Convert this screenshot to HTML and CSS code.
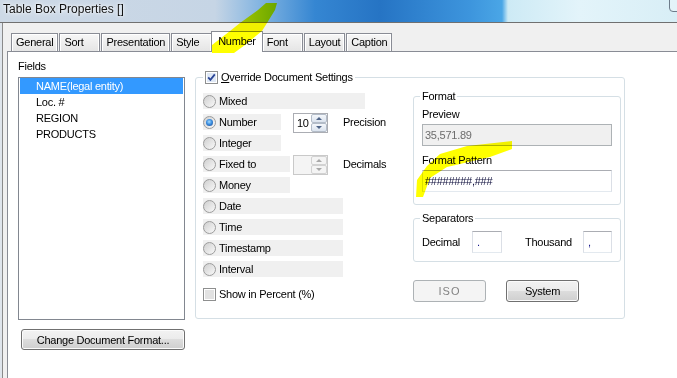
FILE: index.html
```html
<!DOCTYPE html>
<html lang="en">
<head>
  <meta charset="UTF-8">
  <title>Table Box Properties</title>
  <link rel="stylesheet" href="styles.css">
</head>
<body>
  <div class="titlebar">
    <span class="title">Table Box Properties []</span>
    <span class="close-edge"></span>
  </div>

  <div class="window">
    <div class="tabs">
      <div class="tab">General</div>
      <div class="tab">Sort</div>
      <div class="tab">Presentation</div>
      <div class="tab">Style</div>
      <div class="tab active">Number</div>
      <div class="tab">Font</div>
      <div class="tab">Layout</div>
      <div class="tab">Caption</div>
    </div>

    <div class="panel">
      <div class="fields-col">
        <div class="fields-label">Fields</div>
        <ul class="listbox">
          <li class="selected">NAME(legal entity)</li>
          <li>Loc. #</li>
          <li>REGION</li>
          <li>PRODUCTS</li>
        </ul>
        <button class="btn btn-wide">Change Document Format...</button>
      </div>

      <fieldset class="group override">
        <legend>
          <svg class="check" width="13" height="13" viewBox="0 0 13 13">
            <rect x="0.5" y="0.5" width="12" height="12" fill="#fff" stroke="#8e8f8f"/>
            <rect x="2" y="2" width="9" height="9" fill="#dfe8f5"/>
            <path d="M3.2 6.4 L5.4 8.8 L9.8 3.4" fill="none" stroke="#2a4596" stroke-width="1.8"/>
          </svg><u>O</u>verride Document Settings
        </legend>
        <div class="override-body">
          <div class="options">
            <div class="row"><span class="opt opt-long"><i class="radio"></i>Mixed</span></div>
            <div class="row spin-row">
              <span class="opt opt-short"><i class="radio on"></i>Number</span>
              <span class="spin">
                <span class="spin-val">10</span>
                <span class="spin-btns">
                  <span class="spin-btn"><i class="arrow-up"></i></span>
                  <span class="spin-btn"><i class="arrow-down"></i></span>
                </span>
              </span>
              <span class="spin-caption">Precision</span>
            </div>
            <div class="row"><span class="opt opt-short"><i class="radio"></i>Integer</span></div>
            <div class="row spin-row">
              <span class="opt opt-mid"><i class="radio"></i>Fixed to</span>
              <span class="spin disabled">
                <span class="spin-val"></span>
                <span class="spin-btns">
                  <span class="spin-btn"><i class="arrow-up"></i></span>
                  <span class="spin-btn"><i class="arrow-down"></i></span>
                </span>
              </span>
              <span class="spin-caption">Decimals</span>
            </div>
            <div class="row"><span class="opt opt-mid"><i class="radio"></i>Money</span></div>
            <div class="row"><span class="opt"><i class="radio"></i>Date</span></div>
            <div class="row"><span class="opt"><i class="radio"></i>Time</span></div>
            <div class="row"><span class="opt"><i class="radio"></i>Timestamp</span></div>
            <div class="row"><span class="opt"><i class="radio"></i>Interval</span></div>
            <div class="row percent">
              <svg class="check" width="13" height="13" viewBox="0 0 13 13">
                <rect x="0.5" y="0.5" width="12" height="12" fill="#fff" stroke="#8e8f8f"/>
                <rect x="2" y="2" width="9" height="9" fill="#e2e2e2"/>
              </svg>Show in Percent (%)
            </div>
          </div>

          <div class="format-col">
            <fieldset class="group fmt">
              <legend>Format</legend>
              <div class="fmt-label">Preview</div>
              <div class="field disabled">35,571.89</div>
              <div class="fmt-label second">Format Pattern</div>
              <div class="field">########,###</div>
            </fieldset>

            <fieldset class="group sep">
              <legend>Separators</legend>
              <div class="sep-row">
                <span class="sep-name">Decimal</span>
                <span class="sep-input">.</span>
                <span class="sep-name thousand">Thousand</span>
                <span class="sep-input narrow">,</span>
              </div>
            </fieldset>

            <div class="fmt-buttons">
              <button class="btn btn-small disabled">ISO</button>
              <button class="btn btn-small">System</button>
            </div>
          </div>
        </div>
      </fieldset>
    </div>
  </div>

  <svg class="marks" width="677" height="378" viewBox="0 0 677 378">
    <polygon points="212,53 212,45 230,31 240,23 258,10 266,3 277,3 275,10 267,23 262,31 245,45 234,53" fill="#ffff00"/>
    <polygon points="512,141 467,146 440,154 427,166 417,180 416,197 423,197 430,178 447,167 490,157 512,149" fill="#ffff00"/>
  </svg>
</body>
</html>
```

FILE: styles.css
```css
* {
  box-sizing: border-box;
}
body {
  margin: 0;
  width: 677px;
  height: 378px;
  overflow: hidden;
  position: relative;
  background: #dfe5ec;
  font-family: "Liberation Sans", Arial, sans-serif;
  font-size: 11px;
  letter-spacing: -0.25px;
  color: #000;
}
.titlebar {
  position: relative;
  height: 23px;
  padding-left: 3px;
  border-bottom: 1px solid #707070;
  background: linear-gradient(to right, #cdd9e6 0, #c6d5e5 215px, #80b3e1 262px, #3586d2 315px, #2674c4 380px, #3d95dd 470px, #4aa6e6 502px, #cdeaf5 508px, #e3f4fa 580px, #d8eef6 677px);
}
.title {
  font-size: 12px;
  line-height: 18px;
  letter-spacing: 0;
  color: #111;
  text-shadow: 0 0 6px #fff, 0 0 3px #fff;
}
.close-edge {
  position: absolute;
  right: -12px;
  top: -6px;
  width: 20px;
  height: 18px;
  border: 1px solid #6d7b8a;
  border-radius: 4px;
  background: rgba(255, 255, 255, 0.3);
}
.window {
  margin-left: 2px;
  height: 355px;
  border-left: 1px solid #8a8a8a;
  background: #f0f0f0;
  display: flex;
  flex-direction: column;
}
.tabs {
  display: flex;
  align-items: flex-end;
  height: 28px;
  padding-left: 8px;
}
.tab {
  height: 18px;
  min-width: 41px;
  padding: 0 4px;
  margin-right: 1px;
  border: 1px solid #898c95;
  border-bottom: none;
  line-height: 17px;
  background: linear-gradient(#f7f7f7, #e5e5e5);
  box-shadow: inset 1px 1px 0 #fff, inset -1px 0 0 #fff;
}
.tab.active {
  position: relative;
  z-index: 1;
  height: 21px;
  padding: 0 6px;
  margin: 0 -1px -1px -2px;
  line-height: 19px;
  background: #fff;
  box-shadow: none;
}
.panel {
  flex: 1;
  margin-left: 4px;
  padding: 7px 0 0 10px;
  background: #fff;
  border-top: 1px solid #898c95;
  border-left: 1px solid #898c95;
  display: flex;
  align-items: flex-start;
}
.fields-col {
  width: 167px;
  display: flex;
  flex-direction: column;
}
.fields-label {
  line-height: 14px;
  margin-bottom: 4px;
}
.listbox {
  height: 243px;
  margin: 0;
  padding: 0 1px;
  list-style: none;
  border: 1px solid #828790;
}
.listbox li {
  height: 16px;
  line-height: 16px;
  padding-left: 16px;
}
.listbox li.selected {
  background: #3399ff;
  color: #fff;
}
.btn {
  font-family: inherit;
  font-size: 11px;
  letter-spacing: inherit;
  color: #000;
  padding: 0;
  border: 1px solid #707070;
  border-radius: 3px;
  background: linear-gradient(#f2f2f2 0, #ebebeb 50%, #dddddd 50%, #cfcfcf 100%);
  box-shadow: inset 0 0 0 1px #fbfbfb;
}
.btn-wide {
  width: 164px;
  height: 21px;
  margin: 9px 0 0 3px;
}
.btn-small {
  width: 73px;
  height: 22px;
}
.btn.disabled {
  border-color: #adb2b5;
  background: #f4f4f4;
  color: #838383;
  box-shadow: none;
  letter-spacing: 1px;
}
.group {
  margin: 0;
  min-width: 0;
  border: 1px solid #d5dfe5;
  border-radius: 3px;
}
.group legend {
  padding: 0 2px;
  line-height: 13px;
}
.check {
  display: inline-block;
  vertical-align: top;
  margin-right: 3px;
}
.override {
  width: 430px;
  height: 248px;
  margin: 12px 0 0 10px;
  padding: 0 3px 0 7px;
}
.override-body {
  display: flex;
}
.options {
  width: 210px;
  margin-top: 9px;
  display: flex;
  flex-direction: column;
  gap: 5px;
}
.row {
  display: flex;
  align-items: center;
  height: 16px;
}
.row.spin-row {
  display: grid;
  grid-template-columns: 90px 35px auto;
  grid-template-rows: 16px;
  align-items: center;
}
.row.percent {
  margin-top: 4px;
}
.opt {
  display: flex;
  align-items: center;
  width: 140px;
  height: 16px;
  background: #f0f0f0;
}
.opt-long {
  width: 162px;
}
.opt-short {
  width: 78px;
}
.opt-mid {
  width: 87px;
}
.radio {
  position: relative;
  flex: none;
  width: 13px;
  height: 13px;
  margin-right: 3px;
  border-radius: 50%;
  border: 1px solid #9c9c9c;
  background: linear-gradient(135deg, #cfcfcf, #f9f9f9);
}
.radio.on::after {
  content: "";
  position: absolute;
  left: 2px;
  top: 2px;
  width: 7px;
  height: 7px;
  border-radius: 50%;
  background: radial-gradient(circle at 45% 40%, #a6dcff 0, #3b8ee0 45%, #173f86 100%);
}
.spin {
  display: flex;
  width: 35px;
  height: 20px;
  margin-top: 2px;
  border: 1px solid #abadb3;
  background: #fff;
}
.spin-val {
  flex: 1;
  padding-left: 3px;
  line-height: 18px;
}
.spin-btns {
  width: 16px;
  display: flex;
  flex-direction: column;
}
.spin-btn {
  flex: 1;
  display: flex;
  align-items: center;
  justify-content: center;
  border: 1px solid #b3bcc8;
  border-radius: 2px;
  background: linear-gradient(#f4f7fb, #dbe3ee);
}
.arrow-up,
.arrow-down {
  width: 0;
  height: 0;
  border-left: 3px solid transparent;
  border-right: 3px solid transparent;
}
.arrow-up {
  border-bottom: 3px solid #4f6487;
}
.arrow-down {
  border-top: 3px solid #4f6487;
}
.spin.disabled {
  border-color: #c9c9c9;
  background: #f4f4f4;
}
.spin.disabled .spin-btn {
  border-color: #d2d2d2;
  background: #f4f4f4;
}
.spin.disabled .arrow-up {
  border-bottom-color: #a8a8a8;
}
.spin.disabled .arrow-down {
  border-top-color: #a8a8a8;
}
.spin-caption {
  padding-left: 15px;
}
.format-col {
  width: 208px;
  margin-top: 6px;
}
.fmt {
  padding: 0 8px 12px;
}
.fmt legend,
.sep legend {
  margin-left: -2px;
}
.fmt-label {
  line-height: 14px;
  margin: 4px 0 3px;
}
.fmt-label.second {
  margin-top: 7px;
}
.field {
  height: 22px;
  padding-left: 2px;
  line-height: 20px;
  background: #fff;
  border: 1px solid;
  border-color: #abadb3 #dbdfe6 #e3e9ef #dbdfe6;
  color: #0c0c3a;
}
.field.disabled {
  background: #f0f0f0;
  color: #6d6d6d;
  border-color: #adb2b5;
}
.sep {
  margin-top: 7px;
  padding: 0 8px 8px;
}
.sep-row {
  display: flex;
  align-items: center;
  margin-top: 6px;
}
.sep-name {
  width: 50px;
}
.sep-name.thousand {
  width: 58px;
  margin-left: 23px;
}
.sep-input {
  width: 30px;
  height: 22px;
  padding-left: 4px;
  line-height: 20px;
  color: #1a1a8c;
  background: #fff;
  border: 1px solid;
  border-color: #abadb3 #dbdfe6 #e3e9ef #dbdfe6;
}
.sep-input.narrow {
  width: 29px;
}
.fmt-buttons {
  display: flex;
  gap: 20px;
  margin-top: 18px;
}
.marks {
  position: absolute;
  left: 0;
  top: 0;
  z-index: 2;
  pointer-events: none;
  mix-blend-mode: multiply;
}
```
